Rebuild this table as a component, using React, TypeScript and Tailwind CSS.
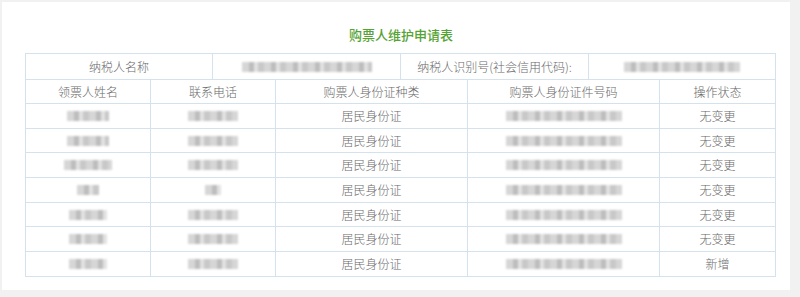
const rows = [
  { a: 42, b: 50, status: '无变更' },
  { a: 42, b: 50, status: '无变更' },
  { a: 48, b: 50, status: '无变更' },
  { a: 22, b: 16, status: '无变更' },
  { a: 38, b: 50, status: '无变更' },
  { a: 38, b: 50, status: '无变更' },
  { a: 38, b: 50, status: '新增' },
];

// pixelated/blurred placeholder for masked values
function Blur({ w }: { w: number }) {
  return (
    <div className="flex justify-center">
      <div
        className="h-[10px] blur-[1px]"
        style={{
          width: w,
          background:
            'repeating-linear-gradient(90deg, #d6d6d6 0 7px, #bdbdbd 7px 12px, #e2e2e2 12px 16px, #c8c8c8 16px 22px)',
        }}
      />
    </div>
  );
}

const cell = 'border border-[#d3e2ec] text-center align-middle';

export default function App() {
  return (
    <div
      className="h-[297px] w-[800px] bg-[#f1f1f1] pt-[2px] pl-[2px]"
      style={{ fontFamily: '"Noto Sans CJK SC", "Noto Sans", sans-serif' }}
    >
      <div className="h-[288px] w-[788px] bg-white pt-[24px] pl-[23px]">
        <h1 className="mb-[9px] w-[750px] pl-[2px] text-center text-[13px] font-medium leading-[18px] text-[#55a332]">
          购票人维护申请表
        </h1>
        <table className="w-[750px] table-fixed border-collapse text-[12px] font-light text-[#6a6a6a]">
          <colgroup>
            <col className="w-[125px]" />
            <col className="w-[62px]" />
            <col className="w-[63px]" />
            <col className="w-[125px]" />
            <col className="w-[67px]" />
            <col className="w-[121px]" />
            <col className="w-[71px]" />
            <col className="w-[116px]" />
          </colgroup>
          <tbody>
            <tr className="h-[26px]">
              <td colSpan={2} className={cell}>纳税人名称</td>
              <td colSpan={2} className={cell}><Blur w={130} /></td>
              <td colSpan={2} className={cell}>纳税人识别号(社会信用代码):</td>
              <td colSpan={2} className={cell}><Blur w={116} /></td>
            </tr>
            <tr className="h-[24px]">
              <td className={cell}>领票人姓名</td>
              <td colSpan={2} className={cell}>联系电话</td>
              <td colSpan={2} className={cell}>购票人身份证种类</td>
              <td colSpan={2} className={cell}>购票人身份证件号码</td>
              <td className={cell}>操作状态</td>
            </tr>
            {rows.map((r, i) => (
              <tr key={i} className="h-[24.7px]">
                <td className={cell}><Blur w={r.a} /></td>
                <td colSpan={2} className={cell}><Blur w={r.b} /></td>
                <td colSpan={2} className={cell}>居民身份证</td>
                <td colSpan={2} className={cell}><Blur w={116} /></td>
                <td className={cell}>{r.status}</td>
              </tr>
            ))}
          </tbody>
        </table>
      </div>
    </div>
  );
}
